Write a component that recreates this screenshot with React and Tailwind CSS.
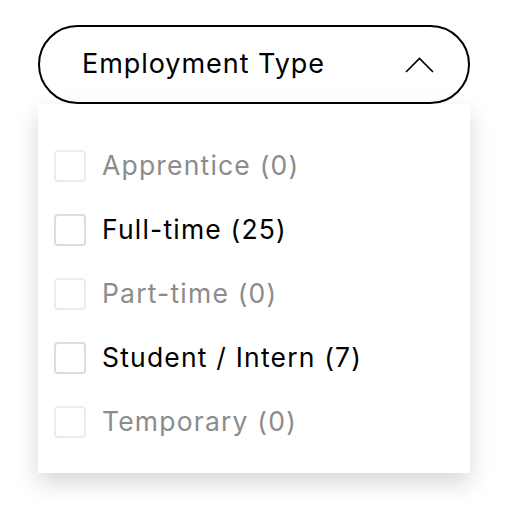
import { useState } from "react";

const options = [
  { label: "Apprentice", count: 0 },
  { label: "Full-time", count: 25 },
  { label: "Part-time", count: 0 },
  { label: "Student / Intern", count: 7 },
  { label: "Temporary", count: 0 },
];

const App = () => {
  const [open, setOpen] = useState(true);
  const [checked, setChecked] = useState([]);

  const toggle = (label) => {
    setChecked((prev) =>
      prev.includes(label) ? prev.filter((l) => l !== label) : [...prev, label]
    );
  };

  return (
    <div
      className="w-[510px] h-[514px] bg-white pt-[25px] pl-[38px]"
      style={{ fontFamily: "Inter, 'Open Sans', sans-serif" }}
    >
      <div className="w-[432px]">
        {/* Toggle */}
        <button
          onClick={() => setOpen(!open)}
          className="w-full h-[79px] rounded-full border-2 border-black flex items-center justify-between pl-[42px] pr-[34px] text-[27px] tracking-[0.035em] text-black"
        >
          <span>Employment Type</span>
          <svg width="29" height="16" viewBox="0 0 29 16" fill="none">
            <path d="M1 15 L14.5 1.5 L28 15" stroke="black" strokeWidth="1.6" />
          </svg>
        </button>

        {/* Options */}
        {open && (
          <div className="bg-white shadow-[0_10px_22px_rgba(0,0,0,0.16)] pt-[30px] pb-[19px] px-4 flex flex-col">
            {options.map((o) => {
              const disabled = o.count === 0;
              return (
                <label
                  key={o.label}
                  className={`h-[64px] flex items-center gap-[16px] text-[26.5px] tracking-[0.045em] ${
                    disabled ? "text-[#8c8c8c]" : "text-black cursor-pointer"
                  }`}
                >
                  <input
                    type="checkbox"
                    disabled={disabled}
                    checked={checked.includes(o.label)}
                    onChange={() => toggle(o.label)}
                    className="sr-only"
                  />
                  <span
                    className={`w-[32px] h-[32px] shrink-0 rounded-[4px] border-2 ${
                      disabled ? "border-[#ececec]" : "border-[#dcdcdc]"
                    }`}
                  />
                  <span>
                    {o.label} ({o.count})
                  </span>
                </label>
              );
            })}
          </div>
        )}
      </div>
    </div>
  );
};

export default App;
